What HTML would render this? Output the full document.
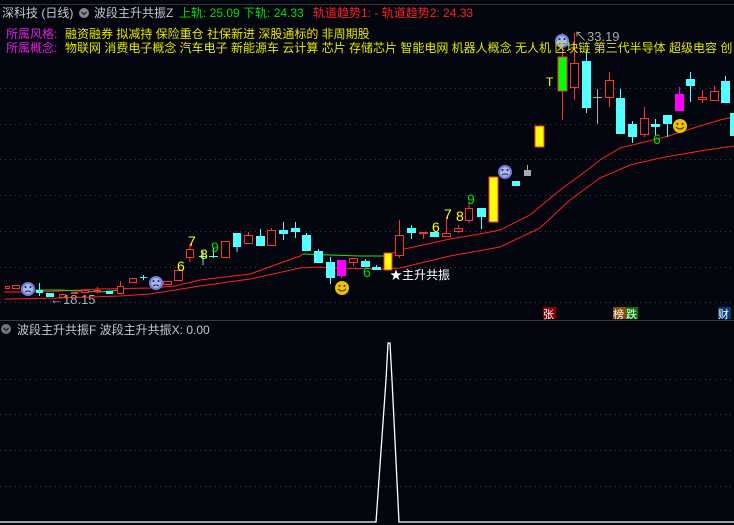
<!DOCTYPE html>
<html><head><meta charset="utf-8"><style>
html,body{margin:0;padding:0;background:#04060f;width:734px;height:525px;overflow:hidden}
svg{display:block}
text{font-family:"Liberation Sans","Noto Sans CJK SC",sans-serif}
</style></head><body>
<svg id="s" width="734" height="525" xmlns="http://www.w3.org/2000/svg">
<rect width="734" height="525" fill="#04060f"/>
<line x1="0" y1="4.5" x2="734" y2="4.5" stroke="#333" stroke-width="1"/>
<g stroke="#444" stroke-dasharray="1,4" stroke-width="1">
<line x1="0" y1="88.5" x2="734" y2="88.5"/><line x1="0" y1="124.5" x2="734" y2="124.5"/>
<line x1="0" y1="159.5" x2="734" y2="159.5"/><line x1="0" y1="195.5" x2="734" y2="195.5"/>
<line x1="0" y1="231.5" x2="734" y2="231.5"/><line x1="0" y1="267.5" x2="734" y2="267.5"/>
<line x1="0" y1="302.5" x2="734" y2="302.5"/>
<line x1="0" y1="379.5" x2="734" y2="379.5"/><line x1="0" y1="414.5" x2="734" y2="414.5"/>
<line x1="0" y1="450.5" x2="734" y2="450.5"/><line x1="0" y1="486.5" x2="734" y2="486.5"/>
</g>
<line x1="0" y1="320.5" x2="734" y2="320.5" stroke="#3a3a3a"/>
<polyline fill="none" stroke="#ff2020" stroke-width="1" points="4,292 40,292 100,289 150,288 175,286 200,280 250,274 300,256 303,254"/>
<polyline fill="none" stroke="#20e020" stroke-width="1" points="303,254 330,255 360,256 385,256"/>
<polyline fill="none" stroke="#ff2020" stroke-width="1" points="385,256 400,250 450,239 480,234 500,230 530,215 560,190 590,168 600,160 620,148 665,137 700,126 720,120 734,117"/>
<polyline fill="none" stroke="#20e020" stroke-width="1" points="35,290 60,290 100,292 120,290"/>
<polyline fill="none" stroke="#ff2020" stroke-width="1" points="5,299 60,298 120,296 150,294 200,286 250,279 300,268 320,267 330,268 380,269 400,268 450,256 500,247 540,228 570,200 600,178 630,165 660,158 700,151 734,146"/>
<g id="c"></g>
<g id="f"></g>
<g font-size="14">
<text x="177" y="271" fill="#ffff00">6</text>
<text x="188" y="246" fill="#ffff00">7</text>
<text x="200" y="259" fill="#ffff00">8</text>
<text x="211" y="252" fill="#00e000">9</text>
<text x="363" y="277" fill="#00e000">6</text>
<text x="432" y="232" fill="#ffff00">6</text>
<text x="444" y="219" fill="#ffff00">7</text>
<text x="456" y="221" fill="#ffff00">8</text>
<text x="467" y="204" fill="#00e000">9</text>
<text x="653" y="144" fill="#00e000">6</text>
<text x="546" y="86" font-size="12" fill="#ffff00">T</text>
</g>
<text x="390" y="279" font-size="12" fill="#ffffff">★主升共振</text>
<text x="50" y="304" font-size="13" fill="#aaa">←18.15</text>
<text x="574" y="41" font-size="13" fill="#aaa">↖33.19</text>
<g font-size="12">
<text x="2" y="17" fill="#c8c8c8">深科技 (日线)</text>
<circle cx="84" cy="13" r="5" fill="#888"/><path d="M81.5 12 L84 14.5 L86.5 12" stroke="#222" fill="none" stroke-width="1.3"/>
<text x="94" y="17" fill="#c8c8c8">波段主升共振Z</text>
<text x="179" y="17" fill="#00e000">上轨: 25.09  下轨: 24.33</text>
<text x="313" y="17" fill="#ff2020">轨道趋势1: -  轨道趋势2: 24.33</text>
<text x="6" y="38" fill="#e020e0">所属风格:</text>
<text x="65" y="38" fill="#e6e600">融资融券 拟减持 保险重仓 社保新进 深股通标的 非周期股</text>
<text x="6" y="52" fill="#e020e0">所属概念:</text>
<text x="65" y="52" fill="#e6e600">物联网 消费电子概念 汽车电子 新能源车 云计算 芯片 存储芯片 智能电网 机器人概念 无人机 区块链 第三代半导体 超级电容 创</text>
<circle cx="6" cy="329" r="5" fill="#777"/><path d="M3.5 328 L6 330.5 L8.5 328" stroke="#222" fill="none" stroke-width="1.3"/>
<text x="17" y="334" fill="#c8c8c8">波段主升共振F  波段主升共振X: 0.00</text>
</g>
<rect x="543" y="307" width="13" height="12" fill="#8a0000"/><text x="543" y="318" font-size="11" fill="#fff">张</text>
<rect x="613" y="307" width="13" height="12" fill="#8a4a00"/><text x="613" y="318" font-size="11" fill="#fff">榜</text>
<rect x="626" y="307" width="12" height="12" fill="#007a00"/><text x="626" y="318" font-size="11" fill="#fff">跌</text>
<rect x="718" y="307" width="13" height="12" fill="#003a7a"/><text x="718" y="318" font-size="11" fill="#fff">财</text>
<polyline fill="none" stroke="#fff" stroke-width="1.3" points="0,522 376,522 386,380 388,343 390,343 392,380 399,522 734,522"/>
</svg>
<script>
var C=[[5,5,286,289,0,0,'r'],[12,8,285,289,0,0,'r'],[36,7,290,293,283,296,'c'],[46,8,293,297,0,0,'c'],[59,7,294,298,0,0,'r'],[71,7,292,294,0,0,'R'],[81,8,290,293,0,0,'r'],[94,7,290,291,287,293,'r'],[106,7,291,294,0,0,'c'],[117,7,286,294,281,294,'r'],[129,8,278,283,0,0,'r'],[140,7,277,278,275,280,'c'],[163,9,281,285,0,0,'r'],[174,9,270,281,0,0,'r'],[186,8,249,258,243,262,'r'],[199,8,256,257,251,265,'c'],[209,9,256,257,248,258,'c'],[221,9,241,258,0,0,'r'],[233,8,233,247,0,252,'c'],[244,9,235,244,232,0,'r'],[256,9,236,246,229,0,'c'],[267,9,230,246,228,0,'r'],[279,9,230,234,222,240,'c'],[291,9,228,232,222,238,'c'],[302,9,235,251,233,0,'c'],[314,9,251,263,249,0,'c'],[326,9,262,278,257,284,'c'],[337,9,260,276,0,278,'m'],[349,9,258,263,0,266,'r'],[361,9,261,267,259,0,'c'],[372,9,267,270,265,0,'c'],[384,8,253,270,0,0,'y'],[395,9,235,256,220,258,'r'],[407,9,228,233,225,239,'c'],[419,9,232,234,0,239,'r'],[430,9,232,237,0,0,'c'],[442,9,233,237,217,0,'r'],[454,9,228,232,225,233,'r'],[465,8,208,221,202,223,'r'],[477,9,208,217,0,229,'c'],[489,9,177,222,0,0,'y'],[512,8,181,186,0,0,'c'],[524,7,170,176,165,0,'g'],[535,9,126,147,0,0,'y'],[558,9,57,91,33,120,'G'],[570,9,63,88,33,100,'r'],[582,9,61,108,50,113,'c'],[593,9,97,98,89,124,'g'],[605,9,80,98,72,107,'r'],[616,9,98,134,89,0,'c'],[628,9,124,137,121,143,'c'],[640,9,118,135,107,137,'r'],[651,9,124,127,119,136,'c'],[663,9,115,124,0,137,'c'],[675,9,94,111,87,0,'m'],[686,9,79,86,72,102,'c'],[698,9,97,100,90,103,'r'],[710,9,91,101,86,0,'r'],[721,9,81,103,76,0,'c'],[730,6,113,136,0,0,'c']];
var g='',col={r:'#ff3030',R:'#ff3030',c:'#54ffff',m:'#ff00ff',y:'#ffff00',g:'#aaaaaa',G:'#00ff00'};
C.forEach(function(a){var x=a[0],w=a[1],t=a[2],b=a[3],wt=a[4]||t,wb=a[5]||b,k=a[6],c=col[k],cx=x+w/2;
var wc=(k=='y'||k=='G')?'#ff3030':c;
g+='<line x1="'+cx+'" y1="'+wt+'" x2="'+cx+'" y2="'+wb+'" stroke="'+wc+'"/>';
if(k=='r')g+='<rect x="'+(x+.5)+'" y="'+(t+.5)+'" width="'+(w-1)+'" height="'+Math.max(b-t-1,1)+'" fill="#04060f" stroke="'+c+'"/>';
else g+='<rect x="'+x+'" y="'+t+'" width="'+w+'" height="'+Math.max(b-t,1)+'" fill="'+c+'"'+((k=='y'||k=='G')?' stroke="#ff3030"':'')+'/>';});
document.getElementById('c').innerHTML=g;
var F=[[28,289,0],[156,283,0],[505,172,0],[562,41,0],[342,288,1],[680,126,1]],h='';
F.forEach(function(f){var x=f[0],y=f[1];if(f[2]){h+='<circle cx="'+x+'" cy="'+y+'" r="7" fill="#f0c000"/><circle cx="'+(x-2.5)+'" cy="'+(y-2)+'" r="1" fill="#333"/><circle cx="'+(x+2.5)+'" cy="'+(y-2)+'" r="1" fill="#333"/><path d="M'+(x-4)+' '+(y+1)+' Q'+x+' '+(y+5)+' '+(x+4)+' '+(y+1)+'" stroke="#333" fill="none"/>';}
else{h+='<circle cx="'+x+'" cy="'+y+'" r="7" fill="#7080d8"/><circle cx="'+x+'" cy="'+y+'" r="5" fill="#a8b8f0"/><circle cx="'+(x-2.5)+'" cy="'+(y-2)+'" r="1" fill="#223"/><circle cx="'+(x+2.5)+'" cy="'+(y-2)+'" r="1" fill="#223"/><path d="M'+(x-3)+' '+(y+3)+' Q'+x+' '+(y+1)+' '+(x+3)+' '+(y+3)+'" stroke="#223" fill="none"/>';}});
document.getElementById('f').innerHTML=h;
</script>
</body></html>
